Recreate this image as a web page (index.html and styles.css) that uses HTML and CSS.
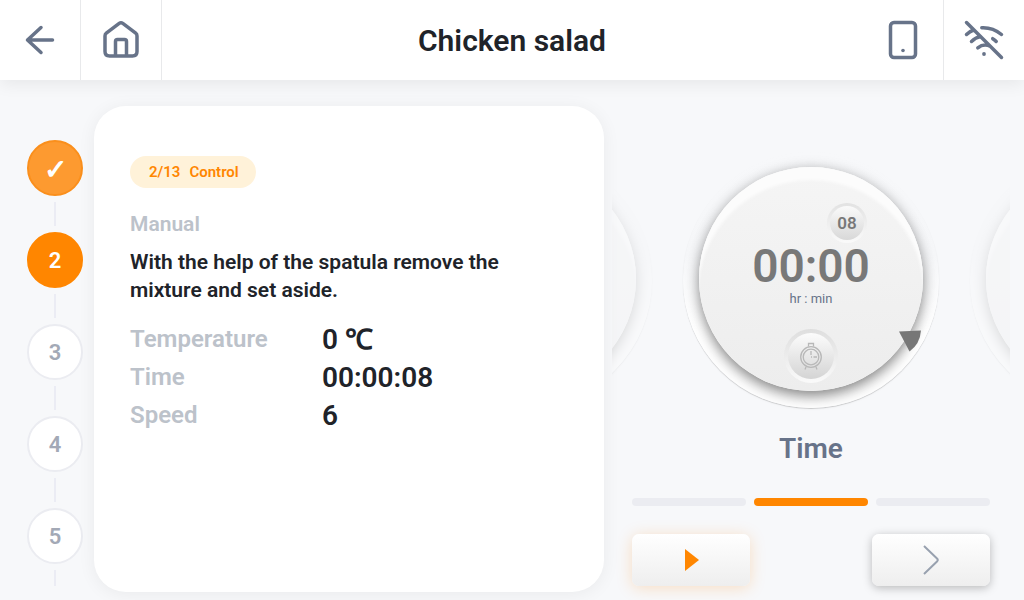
FILE: index.html
```
<!DOCTYPE html>
<html lang="en">
<head>
  <meta charset="UTF-8" />
  <meta name="viewport" content="width=device-width, initial-scale=1.0"/>
  <title>Chicken salad</title>
  <link rel="stylesheet" href="styles.css">
</head>
<body>

  <header class="topbar">
    <button class="icon-btn" type="button" aria-label="Back">
      <svg width="40" height="40" viewBox="0 0 40 40"><path d="M32.500 20H7.500M21 7.500L7.500 20L21 32.500"/></svg>
    </button>
    <button class="icon-btn line-left line-right" type="button" aria-label="Home">
      <svg width="40" height="40" viewBox="0 0 40 40"><path d="M18.200 3.400L5.300 13.200Q4 14.200 4 16v15.500Q4 36 8.500 36h23q4.500 0 4.500-4.500V16q0-1.800-1.300-2.800L21.800 3.400Q20 2 18.200 3.400zM14.500 36V21.500q0-2 2-2h7q2 0 2 2V36"/></svg>
    </button>
    <h1>Chicken salad</h1>
    <button class="icon-btn" type="button" aria-label="Device">
      <svg width="40" height="40" viewBox="0 0 40 40"><rect x="7.500" y="2.500" width="25" height="35" rx="3.500"/><circle class="dot" cx="20" cy="30.500" r="1.800"/></svg>
    </button>
    <button class="icon-btn line-left" type="button" aria-label="Wi-Fi off">
      <svg width="40" height="40" viewBox="0 0 40 40"><path d="M2.500 2.500l35 35M2.500 14.500q3-3 7-4.500M17.800 7.700q11-.5 19.700 6.800M7.500 21.500q4-4 9-5M28.700 18.700q2.200 1.300 3.500 2.800M13.800 27.800q6.200-5 12.800-1.300"/><circle class="dot" cx="20" cy="34" r="1.900"/></svg>
    </button>
  </header>

  <main class="content">
    <ol class="steps">
      <li class="step done"><span>✓</span></li>
      <li class="step active"><span>2</span></li>
      <li class="step"><span>3</span></li>
      <li class="step"><span>4</span></li>
      <li class="step"><span>5</span></li>
    </ol>

    <section class="card">
      <div class="badge"><span>2/13</span><span>Control</span></div>
      <h2>Manual</h2>
      <p>With the help of the spatula remove the mixture and set aside.</p>
      <dl>
        <dt>Temperature</dt><dd>0 ℃</dd>
        <dt>Time</dt><dd>00:00:08</dd>
        <dt>Speed</dt><dd>6</dd>
      </dl>
    </section>

    <section class="panel">
      <div class="carousel">
        <div class="dial faded"><div class="knob"></div></div>
        <div class="dial">
          <div class="knob">
            <span class="seconds">08</span>
            <span class="time">00:00</span>
            <span class="unit">hr : min</span>
            <span class="clock">
              <svg width="24" height="28" viewBox="0 0 24 28">
                <circle cx="12" cy="15" r="10.300"/>
                <circle cx="12" cy="15" r="7.800"/>
                <path d="M9.500 4.500V1.500h5v3M7 25l-1 2.500M17 25l1 2.500M12 9v4M12 15h1M14.500 15H18"/>
              </svg>
            </span>
          </div>
          <svg class="pointer" width="24" height="24" viewBox="0 0 24 24"><path d="M1 2.500L23 1.500Q22 15 11.500 22.500z"/></svg>
        </div>
        <div class="dial faded"><div class="knob"></div></div>
      </div>

      <h3>Time</h3>

      <div class="tabs">
        <span></span>
        <span class="current"></span>
        <span></span>
      </div>

      <div class="actions">
        <button class="play" type="button" aria-label="Start">
          <svg width="16" height="22" viewBox="0 0 16 22"><path d="M2 0l14 11L2 22z"/></svg>
        </button>
        <button class="next" type="button" aria-label="Next">
          <svg width="16" height="30" viewBox="0 0 16 30"><path d="M1 1l13 12.500q1.500 1.500 0 3L1 29"/></svg>
        </button>
      </div>
    </section>
  </main>

</body>
</html>
```
FILE: styles.css
```
* {
  box-sizing: border-box;
}

body {
  font-family: Roboto, sans-serif;
  font-weight: 600;
  background: #f7f8fa;
  color: #202329;
  margin: 0;
  height: 100vh;
  display: flex;
  flex-direction: column;
  overflow: hidden;
}

h1, h2, h3, p, dl, dd, ol {
  margin: 0;
  padding: 0;
  font-weight: 600;
}

button {
  border: none;
  padding: 0;
  cursor: pointer;
}

svg {
  display: block;
  fill: none;
}

/* top bar */
.topbar {
  display: grid;
  grid-template-columns: 80px 82px 1fr 81px 81px;
  grid-template-rows: 80px;
  flex: none;
  background: #fff;
  box-shadow: 0 4px 16px rgba(0, 0, 0, 0.07);
}

h1 {
  font-size: 30px;
  line-height: 82px;
  text-align: center;
}

.icon-btn {
  display: flex;
  align-items: center;
  justify-content: center;
  background: none;
}

.icon-btn svg {
  stroke: #677389;
  stroke-width: 3.5;
  stroke-linecap: round;
  stroke-linejoin: round;
}

.icon-btn .dot {
  fill: #677389;
  stroke: none;
}

.line-left {
  border-left: 1px solid #e8e9eb;
}

.line-right {
  border-right: 1px solid #e8e9eb;
}

.content {
  flex: 1;
  min-height: 0;
  display: grid;
  grid-template-columns: 59px 510fr 398fr;
  grid-template-rows: minmax(0, 1fr);
  gap: 8px;
  padding: 26px 14px 8px 27px;
}

/* steps */
.steps {
  list-style: none;
  padding-top: 34px;
  margin-bottom: 6px;
  overflow: hidden;
}

.step {
  display: flex;
  flex-direction: column;
  align-items: center;
  width: 56px;
}

.step span {
  width: 56px;
  height: 56px;
  border: 2px solid #ebecf1;
  border-radius: 50%;
  background: #fff;
  color: #a3a9b6;
  font-size: 22px;
  line-height: 54px;
  text-align: center;
}

.step::after {
  content: "";
  width: 2px;
  height: 24px;
  margin: 6px 0;
  background: #ebecf4;
}

.step.active span {
  background: #ff8600;
  border-color: #ff8600;
  color: #fff;
}

.step.done span {
  background: #fd9a30;
  border-color: #fa8f1c;
  color: #fff;
  font-size: 28px;
  line-height: 56px;
}

/* recipe card */
.card {
  background: #fff;
  border-radius: 32px;
  padding: 50px 36px;
  box-shadow: 0 2px 18px rgba(0, 0, 0, 0.06);
}

.badge {
  display: inline-flex;
  gap: 9px;
  padding: 0 17px 0 19px;
  border-radius: 16px;
  background: #fff2d9;
  color: #ff8600;
  font-size: 15px;
  line-height: 32px;
}

h2 {
  margin-top: 22px;
  font-size: 21px;
  line-height: 28px;
  color: #bcc2ca;
}

.card p {
  margin-top: 10px;
  font-size: 21px;
  line-height: 28px;
}

dl {
  display: grid;
  grid-template-columns: 192px 1fr;
  margin-top: 16px;
  line-height: 38px;
}

dt {
  font-size: 24px;
  color: #bcc2ca;
}

dd {
  font-size: 28px;
  line-height: 40px;
  height: 38px;
}

/* control panel */
.panel {
  min-width: 0;
  display: flex;
  flex-direction: column;
  justify-content: flex-end;
  padding-bottom: 6px;
}

.carousel {
  display: flex;
  justify-content: center;
  gap: 31px;
  padding: 8px 0;
  overflow: hidden;
}

.dial {
  position: relative;
  flex: none;
  width: 256px;
  height: 256px;
  padding: 15px 16px 17px;
  border-radius: 50%;
  background: linear-gradient(#f7f8fa, #f5f6f8 40%, #fff 70%);
  box-shadow: 0 1px 1px rgba(0, 0, 0, 0.18);
}

.dial.faded {
  opacity: 0.25;
}

.knob {
  display: flex;
  flex-direction: column;
  align-items: center;
  width: 224px;
  height: 224px;
  border-radius: 50%;
  background: linear-gradient(#f5f5f5, #ededed);
  box-shadow: inset 0 14px 3px -1px #fcfcfc, 0 6px 14px -1px rgba(0, 0, 0, 0.44), 0 0 14px rgba(0, 0, 0, 0.12);
  color: #787878;
}

.seconds {
  width: 40px;
  height: 40px;
  margin: 36px 0 0 72px;
  border-radius: 50%;
  border: 3px solid transparent;
  background: linear-gradient(#fafafa, #d8d8d8) padding-box, linear-gradient(#e2e2e2, #fafafa) border-box;
  font-size: 17px;
  line-height: 34px;
  text-align: center;
}

.time {
  font-size: 46px;
  line-height: 46px;
}

.unit {
  font-size: 13px;
  line-height: 20px;
  font-weight: 400;
  color: #677389;
}

.clock {
  display: flex;
  align-items: center;
  justify-content: center;
  width: 54px;
  height: 54px;
  margin-top: 20px;
  border: 4px solid transparent;
  border-radius: 50%;
  background: linear-gradient(#fcfcfc, #d4d4d4) padding-box, linear-gradient(#dedede, #fafafa) border-box;
}

.clock svg {
  stroke: #b8b8b8;
  stroke-width: 1.3;
}

.pointer {
  position: absolute;
  left: 215px;
  top: 177px;
  fill: #777;
}

h3 {
  margin-top: 16px;
  font-size: 28px;
  line-height: 34px;
  text-align: center;
  color: #677389;
}

.tabs {
  display: grid;
  grid-template-columns: repeat(3, 1fr);
  gap: 8px;
  margin: 32px 20px 28px;
}

.tabs span {
  height: 8px;
  border-radius: 4px;
  background: #ebecf1;
}

.tabs .current {
  background: #ff8600;
}

.actions {
  display: flex;
  justify-content: space-between;
  padding: 0 20px;
}

.actions button {
  display: flex;
  align-items: center;
  justify-content: center;
  width: 118px;
  height: 52px;
  border-radius: 7px;
  background: linear-gradient(#fff, #eee);
}

.actions .play {
  box-shadow: 0 2px 16px rgba(255, 134, 0, 0.22);
}

.play svg {
  fill: #ff8600;
}

.actions .next {
  box-shadow: 0 2px 10px rgba(0, 0, 0, 0.26);
}

.next svg {
  stroke: #98a1af;
  stroke-width: 2;
}
```
